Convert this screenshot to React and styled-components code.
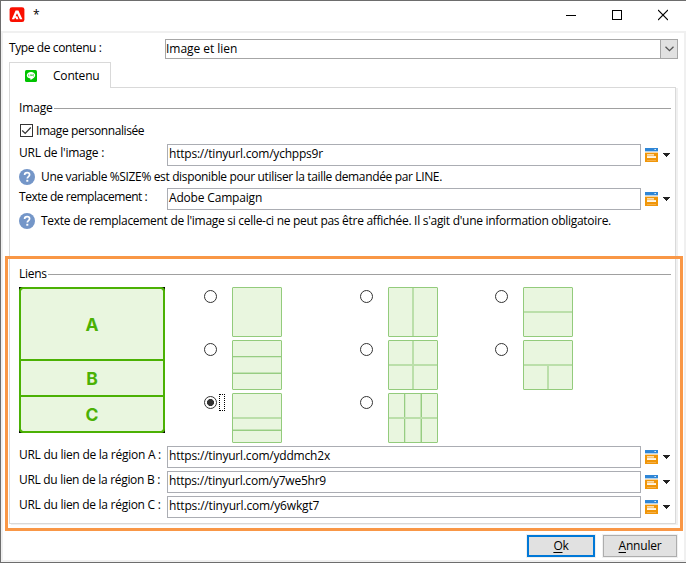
import React from "react";
import styled, { createGlobalStyle, css } from "styled-components";

const GlobalStyle = createGlobalStyle`
  *, *::before, *::after { box-sizing: border-box; }
  body { margin: 0; background: #fff; overflow: hidden; }
  svg { display: block; flex: none; }
`;

const Window = styled.div`
  width: 686px;
  height: 563px;
  display: flex;
  flex-direction: column;
  position: relative;
  background: #fff;
  border: solid #6d6d6d;
  border-width: 1px 0 1px 1px;
  color: #000;
  font: 12px/16px "Open Sans", "Noto Sans", sans-serif;
`;

const TitleBar = styled.header`
  height: 30px;
  flex: none;
  display: flex;
  align-items: flex-start;
  padding: 6px 0 0 8px;
`;

const Title = styled.span`
  flex: 1;
  margin: 0 0 0 8px;
`;

const WindowButton = styled.span`
  width: 46px;
  display: flex;
  justify-content: center;
  padding-top: 2px;
`;

const Body = styled.main`
  flex: 1;
  border: 2px solid #f0f0f0;
  padding: 6px 0 0 6px;
`;

const Text = styled.span`
  white-space: nowrap;
  letter-spacing: ${(p) => p.$ls || 0}px;
`;

const TypeRow = styled.div`
  display: flex;
  height: 20px;
`;

const TypeLabel = styled.div`
  width: 156px;
  padding-top: 1px;
`;

const Select = styled.div`
  width: 513px;
  display: flex;
  justify-content: space-between;
  line-height: 18px;
  border: 1px solid #a6a6a6;
`;

const SelectArrow = styled.span`
  width: 17px;
  display: flex;
  align-items: center;
  justify-content: center;
  background: #e1e1e1;
  border-left: 1px solid #a6a6a6;
`;

const Tab = styled.div`
  position: relative;
  z-index: 1;
  width: 102px;
  height: 26px;
  margin: 3px 0 -1px;
  padding: 5px 0 0 15px;
  display: flex;
  gap: 16px;
  background: #fff;
  border: 1px solid #d9d9d9;
  border-bottom: 0;
`;

const TabIcon = styled.span`
  padding-top: 2px;
`;

const Panel = styled.section`
  width: 667px;
  height: 437px;
  padding: 12px 4px 0 9px;
  border: 1px solid #d9d9d9;
  box-shadow: 2px 1px 0 #f0f0f0;
`;

const Legend = styled.div`
  display: flex;
  align-items: flex-start;
  height: 16px;
  margin-top: ${(p) => p.$top || 0}px;
`;

const LegendName = styled.span`
  width: ${(p) => p.$w}px;
`;

const Rule = styled.span`
  flex: 1;
  height: 1px;
  margin-top: 8px;
  background: #a0a0a0;
`;

const CheckRow = styled.div`
  display: flex;
  height: 16px;
  gap: 3px;
  margin-top: 7px;
  padding-left: 1px;
`;

const CheckBox = styled.span`
  width: 13px;
  height: 13px;
  margin-top: 1px;
  border: 1px solid #333;
`;

const FieldRow = styled.div`
  display: flex;
  height: 22px;
  margin-top: ${(p) => p.$top ?? 3}px;
`;

const FieldLabel = styled.div`
  width: 148px;
  line-height: 18px;
`;

const Input = styled.div`
  width: 474px;
  padding-left: 1px;
  line-height: 18px;
  border: 1px solid #abadb3;
`;

const FieldMenu = styled.span`
  display: flex;
  gap: 5px;
  padding: 4px 0 0 4px;
`;

const Caret = styled.span`
  padding-top: 5px;
`;

const HelpRow = styled.div`
  display: flex;
  height: 16px;
  gap: 6px;
  margin-top: 3px;
`;

const Choices = styled.div`
  display: flex;
  height: 156px;
  margin-top: 5px;
`;

const Preview = styled.div`
  width: 146px;
  height: 146px;
  background: #000;
`;

const Regions = styled.div`
  height: 146px;
  display: grid;
  grid-template-rows: 70px 34px 34px;
  gap: 2px;
  background: #4bb104;
  border: 2px solid #4bb104;
  border-radius: 4px;
  overflow: hidden;
`;

const Region = styled.div`
  display: flex;
  align-items: center;
  justify-content: center;
  padding-top: 1px;
  background: #e9f6df;
  color: #4bb104;
  font: 700 17.5px/18px Inter, "Liberation Sans", sans-serif;
  &:first-child { border-radius: 2px 2px 0 0; }
  &:last-child { border-radius: 0 0 2px 2px; }
`;

const OptionGrid = styled.div`
  display: grid;
  grid-template-columns: 156px 135px 78px;
  grid-auto-rows: 50px;
  row-gap: 3px;
  margin-left: 39px;
`;

const Option = styled.div`
  display: flex;
`;

const RadioArea = styled.span`
  width: 28px;
  display: flex;
  gap: 2px;
  padding-top: 3px;
`;

const Radio = styled.span`
  width: 13px;
  height: 13px;
  border: 1px solid #333;
  border-radius: 50%;
  ${(p) =>
    p.$on &&
    css`
      background: radial-gradient(circle, #333 3.2px, transparent 3.8px);
    `}
`;

const FocusRect = styled.span`
  width: 6px;
  height: 17px;
  margin-top: -2px;
  border: 1px dotted #000;
`;

const Highlight = styled.div`
  position: absolute;
  left: 4px;
  top: 255px;
  width: 678px;
  height: 275px;
  z-index: 2;
  border: 3px solid #f99746;
  pointer-events: none;
`;

const Footer = styled.footer`
  display: flex;
  justify-content: flex-end;
  gap: 8px;
  margin-top: 11px;
  padding-right: 7px;
`;

const Button = styled.div`
  width: ${(p) => p.$w}px;
  height: 22px;
  display: flex;
  align-items: center;
  justify-content: center;
  background: #e1e1e1;
  border: ${(p) => (p.$primary ? "2px solid #0078d7" : "1px solid #adadad")};
  box-shadow: 0 0 0 1px #f0f0f0;
  u { text-underline-offset: 2px; }
`;

const AdobeIcon = () => (
  <svg width="16" height="16" viewBox="0 0 16 16">
    <rect x="0.6" y="0.2" width="14.8" height="14.9" rx="2.4" fill="#fa0f00" />
    <path d="M6.6 3.600h2.800l4 8.600h-2.500L8 6.300 6.600 9.300h1.700l1.200 2.900H7.200l-.7-1.400H5.900l-.6 1.400H2.800z" fill="#fff" />
  </svg>
);

const LineIcon = () => (
  <svg width="12" height="12" viewBox="0 0 12 12">
    <rect width="12" height="12" rx="1.500" fill="#00c300" />
    <path d="M6 2C3.600 2 1.800 3.400 1.800 5.300c0 1.700 1.400 2.900 3.500 3.200.4.100.2.700.2 1.500C7.700 9 10.200 7.300 10.200 5.300 10.200 3.400 8.400 2 6 2z" fill="#fff" />
    <path d="M3.500 4.300v1.800h.9M5.300 4.300v1.800M6.200 6.100V4.500l1 1.500V4.300M9 4.400h-.8v1.700H9" fill="none" stroke="#00c300" strokeWidth=".5" />
  </svg>
);

const HelpIcon = () => (
  <svg width="16" height="16" viewBox="0 0 16 16">
    <circle cx="8" cy="8" r="8" fill="#7496c8" />
    <path d="M5.600 6.100c0-1.500 1-2.400 2.500-2.400s2.500.9 2.500 2.100c0 1.900-2.300 1.900-2.300 3.800" fill="none" stroke="#fff" strokeWidth="1.700" />
    <rect x="7.300" y="10.800" width="2" height="1.900" fill="#fff" />
  </svg>
);

const CardIcon = () => (
  <svg width="13" height="14" viewBox="0 0 13 14" shapeRendering="crispEdges">
    <rect width="13" height="3" fill="#2f86d6" />
    <rect x="9" y="1" width="1" height="1" fill="#8fc0ee" />
    <rect x="10" y="1" width="1" height="1" fill="#d5e8f9" />
    <rect y="3" width="13" height="1" fill="#b5d3ec" />
    <rect y="4" width="13" height="1" fill="#f9d9a8" />
    <rect y="5" width="13" height="9" fill="#f09609" />
    <rect x="2" y="6" width="7" height="1" fill="#fbdcaa" />
    <rect x="2" y="7" width="7" height="1" fill="#f8c376" />
    <rect x="2" y="8" width="9" height="1" fill="#fdeed4" />
    <rect x="2" y="9" width="9" height="1" fill="#fff6e6" />
    <rect x="2" y="12" width="9" height="1" fill="#f5b04a" />
  </svg>
);

const MenuCaret = () => (
  <svg width="7" height="4" viewBox="0 0 7 4" shapeRendering="crispEdges">
    <path d="M0 0h7v1H6v1H5v1H4v1H3V3H2V2H1V1H0z" fill="#222" />
  </svg>
);

const SOFT = "#bbdfaa";
const FIRM = "#97cd82";
const HALF = 24;

const LAYOUTS = [
  { id: "single", lines: [] },
  { id: "columns", lines: [{ v: HALF }] },
  { id: "rows", lines: [{ h: HALF }] },
  { id: "three-rows", lines: [{ h: 16, thin: 1 }, { h: 32, thin: 2 }] },
  { id: "quarters", lines: [{ v: HALF }, { h: HALF }] },
  { id: "top-split", lines: [{ h: HALF }, { v: HALF, from: 26 }] },
  { id: "large-small", lines: [{ h: HALF }, { h: 36, thin: 2 }], selected: true },
  { id: "six", lines: [{ v: 16, thin: 1 }, { v: 32, thin: 2 }, { h: HALF }] },
];

function Line({ v, h, from = 1, thin }) {
  const bar = (at, size, fill) =>
    v !== undefined ? (
      <rect x={at} y={from} width={size} height={49 - from} fill={fill} />
    ) : (
      <rect x={from} y={at} width={49 - from} height={size} fill={fill} />
    );
  const at = v ?? h;
  if (!thin) return bar(at, 2, SOFT);
  return (
    <>
      {bar(at, 1, thin === 1 ? FIRM : "#c3e3b4")}
      {bar(at + 1, 1, thin === 1 ? "#d3ebc7" : FIRM)}
    </>
  );
}

const Thumb = ({ lines }) => (
  <svg width="50" height="50" viewBox="0 0 50 50">
    <rect x=".5" y=".5" width="49" height="49" rx=".5" fill="#e9f6df" stroke="#93cb7c" />
    {lines.map((line, i) => (
      <Line key={i} {...line} />
    ))}
  </svg>
);

const Field = ({ label, labelLs, value, valueLs, top }) => (
  <FieldRow $top={top}>
    <FieldLabel>
      <Text $ls={labelLs}>{label}</Text>
    </FieldLabel>
    <Input>
      <Text $ls={valueLs}>{value}</Text>
    </Input>
    <FieldMenu>
      <CardIcon />
      <Caret>
        <MenuCaret />
      </Caret>
    </FieldMenu>
  </FieldRow>
);

export default function App() {
  return (
    <Window>
      <GlobalStyle />
      <TitleBar>
        <AdobeIcon />
        <Title>*</Title>
        <WindowButton>
          <svg width="10" height="12" shapeRendering="crispEdges">
            <rect y="6" width="10" height="1" />
          </svg>
        </WindowButton>
        <WindowButton>
          <svg width="10" height="12" shapeRendering="crispEdges">
            <rect x=".5" y="1.5" width="9" height="9" fill="none" stroke="#000" />
          </svg>
        </WindowButton>
        <WindowButton>
          <svg width="10" height="12">
            <path d="M0 1l10 10M10 1L0 11" stroke="#000" strokeWidth="1.1" />
          </svg>
        </WindowButton>
      </TitleBar>
      <Body>
        <TypeRow>
          <TypeLabel>
            <Text $ls={-0.4}>Type de contenu :</Text>
          </TypeLabel>
          <Select>
            <Text $ls={-0.03}>Image et lien</Text>
            <SelectArrow>
              <svg width="9" height="6">
                <path d="M.5.7l4 4 4-4" fill="none" stroke="#555" strokeWidth="1.3" />
              </svg>
            </SelectArrow>
          </Select>
        </TypeRow>
        <Tab>
          <TabIcon>
            <LineIcon />
          </TabIcon>
          <Text $ls={-0.2}>Contenu</Text>
        </Tab>
        <Panel>
          <Legend>
            <LegendName $w={35}>
              <Text $ls={-0.15}>Image</Text>
            </LegendName>
            <Rule />
          </Legend>
          <CheckRow>
            <CheckBox>
              <svg width="11" height="11">
                <path d="M1.200 5.500l3 3 5.600-6" fill="none" stroke="#333" strokeWidth="1.200" />
              </svg>
            </CheckBox>
            <Text $ls={-0.42}>Image personnalisée</Text>
          </CheckRow>
          <Field
            top={5}
            label="URL de l'image :"
            labelLs={-0.22}
            value="https://tinyurl.com/ychpps9r"
            valueLs={-0.21}
          />
          <HelpRow>
            <HelpIcon />
            <Text $ls={-0.358}>
              Une variable %SIZE% est disponible pour utiliser la taille demandée par LINE.
            </Text>
          </HelpRow>
          <Field
            label="Texte de remplacement :"
            labelLs={-0.47}
            value="Adobe Campaign"
            valueLs={-0.18}
          />
          <HelpRow>
            <HelpIcon />
            <Text $ls={-0.291}>
              Texte de remplacement de l'image si celle-ci ne peut pas être affichée. Il s'agit d'une information obligatoire.
            </Text>
          </HelpRow>
          <Legend $top={37}>
            <LegendName $w={29}>
              <Text $ls={-0.3}>Liens</Text>
            </LegendName>
            <Rule />
          </Legend>
          <Choices>
            <Preview>
              <Regions>
                <Region>A</Region>
                <Region>B</Region>
                <Region>C</Region>
              </Regions>
            </Preview>
            <OptionGrid>
              {LAYOUTS.map(({ id, lines, selected }) => (
                <Option key={id}>
                  <RadioArea>
                    <Radio $on={selected} />
                    {selected && <FocusRect />}
                  </RadioArea>
                  <Thumb lines={lines} />
                </Option>
              ))}
            </OptionGrid>
          </Choices>
          <Field
            label="URL du lien de la région A :"
            labelLs={-0.265}
            value="https://tinyurl.com/yddmch2x"
            valueLs={-0.2}
          />
          <Field
            label="URL du lien de la région B :"
            labelLs={-0.305}
            value="https://tinyurl.com/y7we5hr9"
            valueLs={-0.23}
          />
          <Field
            label="URL du lien de la région C :"
            labelLs={-0.28}
            value="https://tinyurl.com/y6wkgt7"
            valueLs={-0.165}
          />
        </Panel>
        <Footer>
          <Button $w={68} $primary>
            <Text $ls={-0.2}>
              <u>O</u>k
            </Text>
          </Button>
          <Button $w={74}>
            <Text $ls={-0.22}>
              <u>A</u>nnuler
            </Text>
          </Button>
        </Footer>
      </Body>
      <Highlight />
    </Window>
  );
}
